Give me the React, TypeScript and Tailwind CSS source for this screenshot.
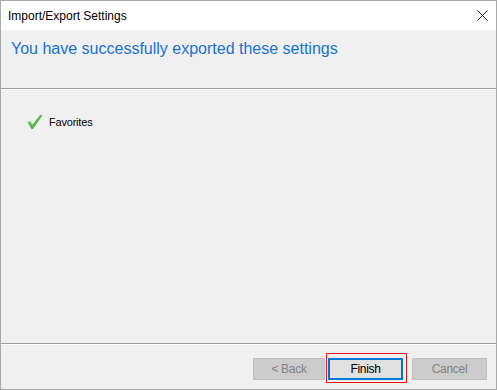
import React from "react";

const SANS = { fontFamily: "'Liberation Sans', Arial, sans-serif" };

function Check() {
  return (
    <svg width="16" height="16" viewBox="0 0 16 16" className="shrink-0">
      <defs>
        <linearGradient id="g" x1="0" y1="0" x2="1" y2="1">
          <stop offset="0" stopColor="#7fd36e" />
          <stop offset="1" stopColor="#3aa53a" />
        </linearGradient>
      </defs>
      <path d="M0.5 8.5 L3 7 L5.5 10.5 L13.5 0.5 L15.5 1.5 L6 15 L4.5 15 Z" fill="url(#g)" />
    </svg>
  );
}

export default function App() {
  return (
    <div
      className="w-[497px] h-[390px] border border-[#a9a9a9] bg-[#f0f0f0] flex flex-col overflow-hidden"
      style={SANS}
    >
      <div className="h-[29px] bg-white flex items-center justify-between pl-[7px] pr-[8px] shrink-0">
        <span className="text-[12px] text-black leading-none">Import/Export Settings</span>
        <svg width="11" height="11" viewBox="0 0 11 11" className="mb-[1px]">
          <path d="M0.5 0.5 L10.5 10.5 M10.5 0.5 L0.5 10.5" stroke="#222" strokeWidth="1" />
        </svg>
      </div>
      <div className="h-[58px] shrink-0 pl-[10px] pt-[9px]">
        <div className="text-[16px] leading-[20px] text-[#1a72d2]">
          You have successfully exported these settings
        </div>
      </div>
      <div className="h-px bg-[#a0a0a0] shrink-0" />
      <div className="h-px bg-white shrink-0" />
      <div className="h-[253px] shrink-0 pl-[26px] pt-[24px]">
        <div className="flex items-center gap-[6px]">
          <Check />
          <span className="text-[11px] tracking-[-0.2px] text-black">Favorites</span>
        </div>
      </div>
      <div className="h-px bg-[#a0a0a0] shrink-0" />
      <div className="h-px bg-white shrink-0" />
      <div className="flex-1 flex justify-end items-start pt-[13px] pr-[9px]">
        <div className="w-[72px] h-[22px] bg-[#cccccc] border border-[#bfbfbf] flex items-center justify-center text-[12px] tracking-[-0.3px] text-[#838383] mr-[3px]">
          &lt; Back
        </div>
        <div className="relative w-[75px] h-[22px] bg-[#e1e1e1] border-2 border-[#0078d7] flex items-center justify-center text-[12px] tracking-[-0.3px] text-black mr-[9px]">
          Finish
          <div className="absolute left-[-4px] top-[-7px] w-[81px] h-[30px] border border-[#e8141c]" />
        </div>
        <div className="w-[75px] h-[22px] bg-[#cccccc] border border-[#bfbfbf] flex items-center justify-center text-[12px] tracking-[-0.3px] text-[#838383]">
          Cancel
        </div>
      </div>
    </div>
  );
}
